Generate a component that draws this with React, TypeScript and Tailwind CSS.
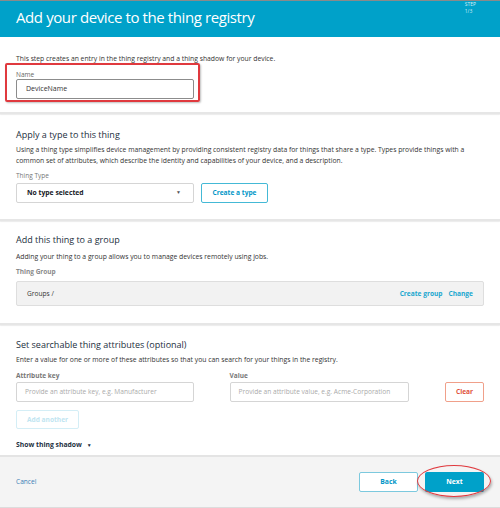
import React from 'react';

const font = { fontFamily: '"Open Sans", "Liberation Sans", sans-serif' };

const Divider: React.FC = () => (
  <div className="h-[2px] bg-[#e6e6e6] shadow-[0_1px_1px_rgba(0,0,0,0.08)]" />
);

const App: React.FC = () => {
  return (
    <div className="relative w-[500px] h-[508px] bg-white overflow-hidden text-[#232f3e]" style={font}>
      <div className="h-[1px] bg-[#8a8a8a]" />
      <header className="relative h-[36px] bg-[#00a1c9] flex items-center px-4">
        <h1 className="text-[15px] leading-none text-white tracking-[-0.4px] -mt-[3px]">Add your device to the thing registry</h1>
        <div className="absolute right-[24px] top-0 text-[5px] leading-[7px] text-[#cfeef7]">
          <div>STEP</div>
          <div>1/3</div>
        </div>
      </header>

      <section className="px-4 pt-[17px] pb-[7px]">
        <p className="text-[6.8px] text-[#333]">This step creates an entry in the thing registry and a thing shadow for your device.</p>
        <div className="relative mt-[6px]">
          <div className="text-[6.5px] text-[#666] leading-[10px] mt-[1px]">Name</div>
          <div className="w-[178px] h-[20px] border border-[#8c8c8c] rounded-[2px] flex items-center px-[9px] text-[7px] text-[#333] -mt-[1px]">DeviceName</div>
          <div className="absolute -left-[11px] -top-[7px] w-[195px] h-[39px] border-2 border-[#e0393e] rounded-[2px] shadow-[1px_1px_2px_rgba(0,0,0,0.25)]" />
        </div>
      </section>

      <div className="mt-[6px]"><Divider /></div>

      <section className="px-4 pt-[14px] pb-[16px]">
        <h2 className="text-[9px] leading-[14px]">Apply a type to this thing</h2>
        <p className="text-[6.8px] leading-[11px] text-[#333] mt-[2px]">
          Using a thing type simplifies device management by providing consistent registry data for things that share a type. Types provide things with a common set of attributes, which describe the identity and capabilities of your device, and a description.
        </p>
        <div className="text-[6.5px] text-[#777] mt-[5px] leading-[10px]">Thing Type</div>
        <div className="flex gap-[7px] mt-[2px]">
          <div className="w-[178px] h-[20px] border border-[#d5d5d5] rounded-[2px] flex items-center justify-between px-[10px] text-[6.8px] font-bold text-[#16191f]">
            <span>No type selected</span>
            <span className="text-[5px] text-[#555] mr-[2px]">▼</span>
          </div>
          <div className="w-[67px] h-[20px] border border-[#44b9d6] rounded-[2px] flex items-center justify-center text-[6.6px] font-bold text-[#0096c7]">Create a type</div>
        </div>
      </section>

      <Divider />

      <section className="px-4 pt-[12px] pb-[17px]">
        <h2 className="text-[9px] leading-[14px]">Add this thing to a group</h2>
        <p className="text-[6.8px] leading-[11px] text-[#333] mt-[4px]">Adding your thing to a group allows you to manage devices remotely using jobs.</p>
        <div className="text-[6.5px] font-bold text-[#8a8a8a] mt-[5px] leading-[10px]">Thing Group</div>
        <div className="mt-[4px] h-[25px] bg-[#f2f2f2] border border-[#dedede] rounded-[2px] flex items-center justify-between px-[10px] text-[6.6px]">
          <span className="text-[#333]">Groups /</span>
          <span className="flex gap-[6px] font-bold text-[#1aa7cf]">
            <span>Create group</span>
            <span>Change</span>
          </span>
        </div>
      </section>

      <Divider />

      <section className="px-4 pt-[13px]">
        <h2 className="text-[9px] leading-[14px]">Set searchable thing attributes (optional)</h2>
        <p className="text-[6.8px] leading-[11px] text-[#333] mt-[2px]">Enter a value for one or more of these attributes so that you can search for your things in the registry.</p>
        <div className="flex mt-[6px]">
          <div className="w-[214px]">
            <div className="text-[6.5px] font-bold text-[#777] leading-[10px]">Attribute key</div>
            <div className="w-[178px] h-[20px] border border-[#d5d5d5] rounded-[2px] flex items-center px-[8px] text-[6.6px] text-[#aaa] mt-[1px]">Provide an attribute key, e.g. Manufacturer</div>
          </div>
          <div className="w-[216px]">
            <div className="text-[6.5px] font-bold text-[#777] leading-[10px]">Value</div>
            <div className="w-[179px] h-[20px] border border-[#d5d5d5] rounded-[2px] flex items-center px-[8px] text-[6.6px] text-[#aaa] mt-[1px]">Provide an attribute value, e.g. Acme-Corporation</div>
          </div>
          <div className="w-[39px] h-[20px] mt-[11px] border border-[#f0a08a] rounded-[2px] flex items-center justify-center text-[6.6px] font-bold text-[#e0533a]">Clear</div>
        </div>
        <div className="mt-[8px] w-[63px] h-[19px] border border-[#d4eef6] rounded-[2px] flex items-center justify-center text-[6.6px] font-bold text-[#bfe5f1]">Add another</div>
        <div className="mt-[11px] flex items-center gap-[5px] text-[6.8px] font-bold text-[#232f3e]">
          <span>Show thing shadow</span>
          <span className="text-[5px]">▼</span>
        </div>
      </section>

      <footer className="absolute left-0 right-0 top-[455px] h-[52px] bg-[#f4f4f4] border-t-2 border-[#e4e4e4] flex items-center justify-between px-4">
        <span className="text-[6.6px] text-[#3a7fb5]">Cancel</span>
        <div className="flex gap-[7px]">
          <div className="w-[59px] h-[20px] bg-white border border-[#7cc9de] rounded-[2px] flex items-center justify-center text-[6.8px] font-bold text-[#0096c7]">Back</div>
          <div className="relative w-[59px] h-[20px] bg-[#00a1c9] rounded-[2px] flex items-center justify-center text-[6.8px] font-bold text-white">
            Next
            <div className="absolute -left-[8px] -top-[7px] w-[74px] h-[32px] rounded-[50%] border-[1.5px] border-[#e0393e] shadow-[1px_2px_3px_rgba(0,0,0,0.3)]" />
          </div>
        </div>
      </footer>
      <div className="absolute left-0 right-0 top-[507px] h-[1px] bg-[#dcdcdc]" />
    </div>
  );
};

export default App;
